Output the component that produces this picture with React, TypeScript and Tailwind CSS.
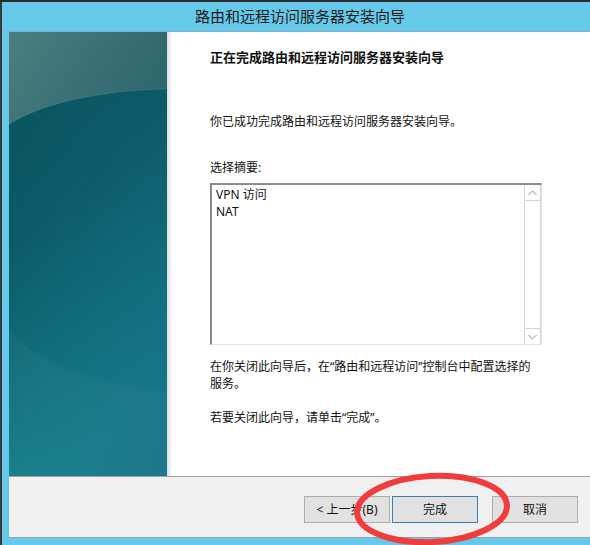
import React from "react";

function Banner() {
  return (
    <svg width="158" height="444" viewBox="0 0 158 444" className="block">
      <defs>
        <linearGradient id="base" x1="0" y1="0" x2="0.25" y2="1">
          <stop offset="0" stopColor="#09525c" />
          <stop offset="0.45" stopColor="#0d5b68" />
          <stop offset="1" stopColor="#13808a" />
        </linearGradient>
        <linearGradient id="side" x1="0" y1="0" x2="1" y2="0">
          <stop offset="0" stopColor="#1a6a88" stopOpacity="0" />
          <stop offset="1" stopColor="#1c6688" stopOpacity="0.55" />
        </linearGradient>
        <linearGradient id="fade" x1="0" y1="0" x2="0" y2="1">
          <stop offset="0" stopColor="#000" stopOpacity="0" />
          <stop offset="0.5" stopColor="#000" stopOpacity="0" />
          <stop offset="1" stopColor="#000" stopOpacity="1" />
        </linearGradient>
        <mask id="m">
          <rect width="158" height="444" fill="url(#fadeW)" />
        </mask>
        <linearGradient id="fadeW" x1="0" y1="0" x2="0" y2="1">
          <stop offset="0" stopColor="#fff" stopOpacity="0.1" />
          <stop offset="0.55" stopColor="#fff" stopOpacity="0.4" />
          <stop offset="1" stopColor="#fff" stopOpacity="1" />
        </linearGradient>
        <linearGradient id="top" x1="0" y1="0" x2="1" y2="0.4">
          <stop offset="0" stopColor="#4b7e80" />
          <stop offset="1" stopColor="#2e676d" />
        </linearGradient>
      </defs>
      <rect width="158" height="444" fill="url(#base)" />
      <rect width="158" height="444" fill="url(#side)" mask="url(#m)" />
      <path d="M0,0 H158 V57 C100,58 40,68 0,92 Z" fill="url(#top)" />
      <path d="M0,92 C40,68 100,58 158,57" fill="none" stroke="#ffffff" strokeOpacity="0.08" strokeWidth="1.5" />
      <path d="M0,300 C30,330 80,350 158,360 V444 H0 Z" fill="#ffffff" fillOpacity="0.03" />
    </svg>
  );
}

function Chevron({ up }: { up?: boolean }) {
  return (
    <svg width="9" height="6" viewBox="0 0 9 6">
      <path
        d={up ? "M0.5,5 L4.5,1 L8.5,5" : "M0.5,1 L4.5,5 L8.5,1"}
        fill="none"
        stroke="#8a8a8a"
        strokeWidth="1"
      />
    </svg>
  );
}

function Btn({ children, primary }: { children: React.ReactNode; primary?: boolean }) {
  return (
    <div
      className={
        "w-[86px] h-[27px] flex items-center justify-center text-[12px] text-[#111] bg-[#e1e1e1] border " +
        (primary ? "border-[#3c7fb1]" : "border-[#adadad]")
      }
    >
      {children}
    </div>
  );
}

export default function App() {
  return (
    <div className="relative w-[590px] h-[545px] overflow-hidden flex flex-col bg-[#66c9e9] font-['Noto_Sans','Noto_Sans_CJK_SC',sans-serif] text-[#111]">
      <div className="h-[2px] bg-[#2b2b2b] shrink-0" />
      <div className="flex flex-1 min-h-0">
        <div className="w-[2px] bg-[#3a3a3a] shrink-0" />
        <div className="flex-1 flex flex-col min-w-0">
          <div className="h-[29px] shrink-0 flex items-center justify-center pl-[8px] text-[15px] text-[#1b1b1b]">
            路由和远程访问服务器安装向导
          </div>
          <div className="h-[1px] bg-[#7fb6cd] shrink-0" />
          <div className="flex flex-1 flex-col pl-[7px] min-h-0">
            <div className="flex h-[444px] shrink-0">
              <Banner />
              <div className="w-[5px] bg-gradient-to-r from-[#dcdcdc] to-white shrink-0" />
              <div className="flex-1 bg-white pl-[38px] flex flex-col">
                <div className="mt-[17px] text-[13px] font-bold leading-[17px]">
                  正在完成路由和远程访问服务器安装向导
                </div>
                <div className="mt-[47px] text-[12px] leading-[17px]">
                  你已成功完成路由和远程访问服务器安装向导。
                </div>
                <div className="mt-[29px] text-[12px] leading-[17px]">选择摘要:</div>
                <div className="mt-[7px] w-[332px] h-[162px] flex border-t-2 border-l-2 border-t-[#8a8a8a] border-l-[#8a8a8a] border-r border-b border-r-[#e3e3e3] border-b-[#e3e3e3]">
                  <div className="flex-1 pl-[4px] pt-[1px] text-[12px] leading-[17px]">
                    <div>VPN 访问</div>
                    <div>NAT</div>
                  </div>
                  <div className="w-[17px] flex flex-col border-l border-r border-[#d4d4d4]">
                    <div className="h-[16px] flex items-center justify-center border-b border-[#d4d4d4]">
                      <Chevron up />
                    </div>
                    <div className="flex-1" />
                    <div className="h-[16px] flex items-center justify-center border-t border-[#d4d4d4]">
                      <Chevron />
                    </div>
                  </div>
                </div>
                <div className="mt-[13px] text-[12px] leading-[17px]">
                  在你关闭此向导后，在“路由和远程访问”控制台中配置选择的
                  <br />
                  服务。
                </div>
                <div className="mt-[17px] text-[12px] leading-[17px]">
                  若要关闭此向导，请单击“完成”。
                </div>
              </div>
            </div>
            <div className="h-[1px] bg-[#a0a0a0] shrink-0" />
            <div className="h-[60px] bg-[#f0f0f0] shrink-0 flex justify-end items-start pt-[19px] pr-[12px]">
              <Btn>&lt; 上一步(B)</Btn>
              <div className="w-[2px]" />
              <Btn primary>完成</Btn>
              <div className="w-[14px]" />
              <Btn>取消</Btn>
            </div>
            <div className="h-[1px] bg-[#a0a0a0] shrink-0" />
          </div>
        </div>
      </div>
      <svg
        className="absolute left-0 top-0 pointer-events-none"
        width="590"
        height="545"
        viewBox="0 0 590 545"
      >
        <ellipse
          cx="432"
          cy="509"
          rx="75"
          ry="33"
          fill="none"
          stroke="#f03c3c"
          strokeWidth="6"
          transform="rotate(-3 432 509)"
        />
      </svg>
    </div>
  );
}
